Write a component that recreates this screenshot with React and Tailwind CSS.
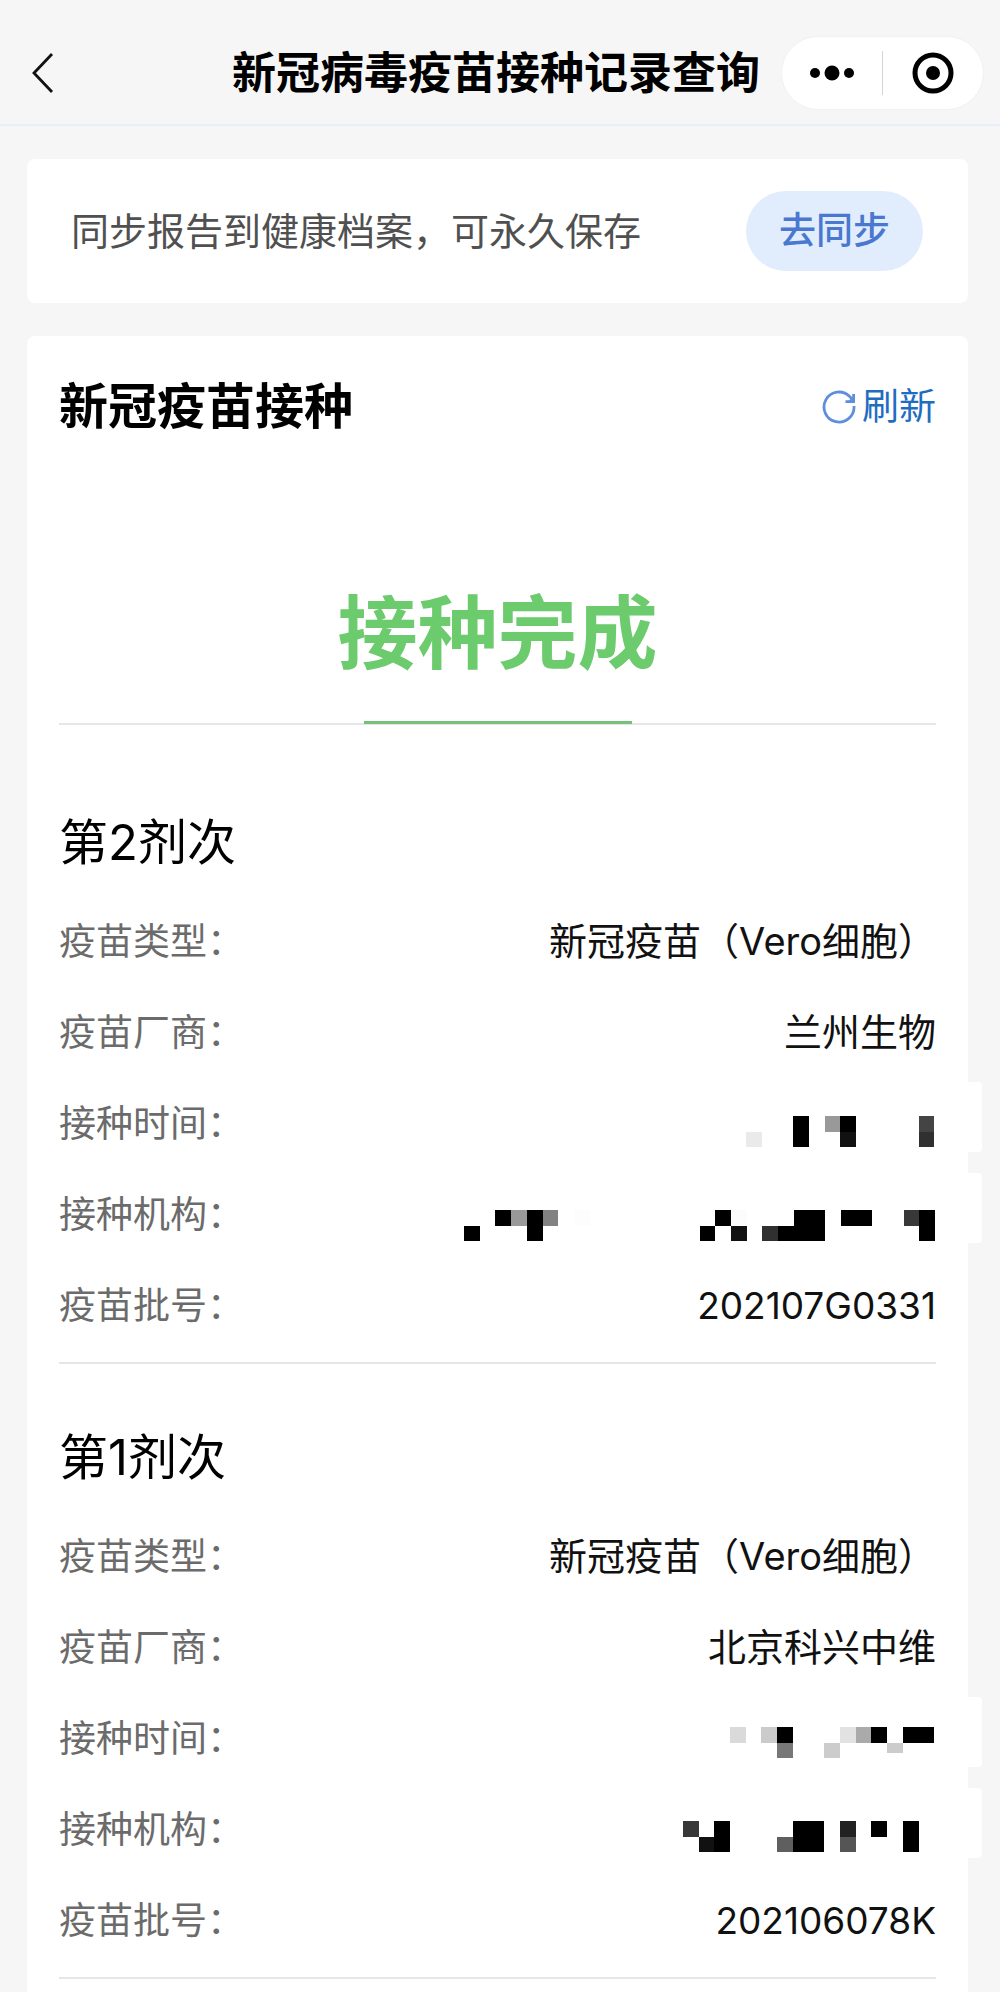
// Each cell is [column, row, shade]; columns count from the left of the block.
const DOSES = [
  {
    title: "第2剂次",
    fields: [
      { label: "疫苗类型：", value: "新冠疫苗（Vero细胞）" },
      { label: "疫苗厂商：", value: "兰州生物" },
      {
        label: "接种时间：",
        mosaic: {
          columns: 12,
          top: 38,
          cells: [
            [3, 0, "#000"], [5, 0, "#999"], [6, 0, "#000"], [11, 0, "#444"],
            [0, 1, "#eaeaea"], [3, 1, "#000"], [6, 1, "#111"], [11, 1, "#303030"],
          ],
        },
      },
      {
        label: "接种机构：",
        mosaic: {
          columns: 30,
          top: 41,
          cells: [
            [2, 0, "#000"], [3, 0, "#999"], [4, 0, "#000"], [5, 0, "#828282"],
            [7, 0, "#fdfdfd"], [16, 0, "#000"], [17, 0, "#fcfcfc"], [21, 0, "#000"],
            [22, 0, "#000"], [24, 0, "#000"], [25, 0, "#000"], [28, 0, "#383838"],
            [29, 0, "#000"], [0, 1, "#000"], [4, 1, "#000"], [15, 1, "#000"],
            [17, 1, "#111"], [19, 1, "#303030"], [20, 1, "#000"], [21, 1, "#000"],
            [22, 1, "#000"], [29, 1, "#000"],
          ],
        },
      },
      { label: "疫苗批号：", code: "202107G0331" },
    ],
  },
  {
    title: "第1剂次",
    fields: [
      { label: "疫苗类型：", value: "新冠疫苗（Vero细胞）" },
      { label: "疫苗厂商：", value: "北京科兴中维" },
      {
        label: "接种时间：",
        mosaic: {
          columns: 13,
          top: 34,
          cells: [
            [0, 0, "#dadada"], [2, 0, "#cbcbcb"], [3, 0, "#000"], [7, 0, "#e2e2e2"],
            [8, 0, "#aaa"], [9, 0, "#000"], [11, 0, "#000"], [12, 0, "#000"],
            [3, 1, "#777"], [6, 1, "#ccc"], [10, 1, "#ccc", 10],
          ],
        },
      },
      {
        label: "接种机构：",
        mosaic: {
          columns: 16,
          top: 37,
          cells: [
            [0, 0, "#383838"], [2, 0, "#000"], [7, 0, "#000"], [8, 0, "#000"],
            [10, 0, "#222"], [12, 0, "#000"], [14, 0, "#000"], [1, 1, "#111"],
            [2, 1, "#000"], [6, 1, "#5f5f5f"], [7, 1, "#000"], [8, 1, "#000"],
            [10, 1, "#555"], [14, 1, "#000"],
          ],
        },
      },
      { label: "疫苗批号：", code: "202106078K" },
    ],
  },
];

const CELL_SIZE = 15.7;

function Mosaic({ columns, top, cells }) {
  const width = Math.ceil(columns * CELL_SIZE) + 1;

  return (
    <svg
      width={width}
      height="91"
      viewBox={`0 0 ${width} 91`}
      shapeRendering="crispEdges"
      aria-hidden="true"
    >
      {cells.map(([column, row, fill, height]) => (
        <rect
          key={`${column}-${row}`}
          x={column * CELL_SIZE}
          y={top + row * CELL_SIZE}
          width={CELL_SIZE}
          height={height || CELL_SIZE}
          fill={fill}
        />
      ))}
    </svg>
  );
}

function Field({ label, value, code, mosaic }) {
  return (
    <div className="relative flex h-[91px] items-center justify-between">
      <dt className="text-[37px] text-[#6b6b6b]">{label}</dt>
      {value ? <dd className="text-[38px] text-[#111]">{value}</dd> : null}
      {code ? <dd className="text-[37px] text-[#111]">{code}</dd> : null}
      {mosaic ? (
        <dd>
          <Mosaic {...mosaic} />
          <span className="absolute top-1 left-full ml-8 h-[70px] w-3.5 rounded-r-sm bg-white" />
        </dd>
      ) : null}
    </div>
  );
}

function Dose({ title, fields }) {
  return (
    <section className="border-b-2 border-[#e6e6e6] pt-10 pb-[11px]">
      <h3 className="flex h-[107px] items-center text-[49px] text-black">
        {title}
      </h3>
      <dl>
        {fields.map((field) => (
          <Field key={field.label} {...field} />
        ))}
      </dl>
    </section>
  );
}

function RefreshIcon() {
  return (
    <svg width="34" height="34" viewBox="0 0 34 34" fill="none" aria-hidden="true">
      <path
        d="M32 16A15 15 0 1 1 27.6 6.4L31 10"
        stroke="#5f8fdc"
        strokeWidth="2.8"
      />
      <path
        d="M31.6 4V11.6H23.5"
        stroke="#5f8fdc"
        strokeWidth="2.8"
      />
      <path d="M31.5 6V11.5H26Z" fill="#5f8fdc" />
    </svg>
  );
}

function Header() {
  return (
    <header className="grid h-[126px] grid-cols-[1fr_auto_1fr] items-center border-b-2 border-[#e6eff9] pt-[22px] pr-4 pl-2">
      <button type="button" aria-label="返回" className="justify-self-start px-6 py-3">
        <svg width="22" height="40" viewBox="0 0 22 40" fill="none" aria-hidden="true">
          <path d="M20 1L2 20L20 39" stroke="#111" strokeWidth="2.8" />
        </svg>
      </button>

      <h1 className="text-[44px] leading-[60px] font-bold whitespace-nowrap text-black">
        新冠病毒疫苗接种记录查询
      </h1>

      <div className="flex h-[74px] w-[203px] items-center justify-self-end rounded-full border border-[#f1f1f1] bg-white">
        <button type="button" aria-label="更多" className="flex h-full flex-1 items-center justify-center">
          <svg width="46" height="16" viewBox="0 0 46 16" aria-hidden="true">
            <circle cx="6" cy="8" r="5" />
            <circle cx="23" cy="8" r="7.5" />
            <circle cx="40" cy="8" r="5" />
          </svg>
        </button>
        <span className="h-11 w-px bg-[#d4d4d4]" />
        <button type="button" aria-label="关闭" className="flex h-full flex-1 items-center justify-center">
          <svg width="42" height="42" viewBox="0 0 42 42" aria-hidden="true">
            <circle cx="21" cy="21" r="18" fill="none" stroke="#000" strokeWidth="5" />
            <circle cx="21" cy="21" r="7" />
          </svg>
        </button>
      </div>
    </header>
  );
}

export default function App() {
  return (
    <div
      lang="zh-CN"
      className="flex min-h-screen flex-col bg-[#f6f6f6] font-['Inter','Noto_Sans_CJK_SC',sans-serif]"
    >
      <Header />

      <main className="flex flex-1 flex-col gap-[33px] pt-[33px] pr-8 pl-[27px]">
        <div className="flex items-center justify-between rounded-lg bg-white py-8 pr-[45px] pl-11">
          <p className="text-[38px] text-[#505050]">
            同步报告到健康档案，可永久保存
          </p>
          <button
            type="button"
            className="h-20 rounded-full bg-[#e1edfd] px-[33px] text-[37px] font-medium text-[#4a78d0]"
          >
            去同步
          </button>
        </div>

        <div className="flex-1 rounded-t-lg bg-white px-8 pt-9">
          <div className="flex h-[70px] items-center justify-between">
            <h2 className="text-[49px] font-bold text-black">新冠疫苗接种</h2>
            <button
              type="button"
              className="flex items-center gap-1.5 text-[37px] text-[#1f6dc0]"
            >
              <RefreshIcon />
              刷新
            </button>
          </div>

          <div className="mt-[131px] flex flex-col items-center border-b-2 border-[#e6e6e6]">
            <p className="pb-7 text-[80px] leading-[120px] font-bold text-[#6bcb6d]">
              接种完成
            </p>
            <span className="-mb-px h-[3px] w-[268px] bg-[#74c179]" />
          </div>

          <div className="pt-6">
            {DOSES.map((dose) => (
              <Dose key={dose.title} {...dose} />
            ))}
          </div>
        </div>
      </main>
    </div>
  );
}
